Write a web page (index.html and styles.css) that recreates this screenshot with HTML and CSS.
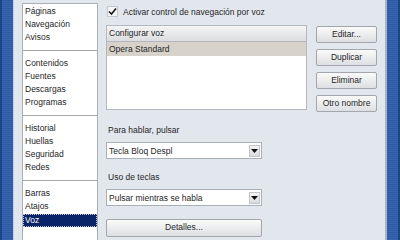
FILE: index.html
```html
<!DOCTYPE html>
<html>

<head>
  <meta charset="utf-8">
  <link rel="stylesheet" href="styles.css">
</head>

<body>
  <div class="window">
    <div class="frame frame-left"></div>

    <div class="dialog">
<!-- section list -->
      <div class="nav">
        <div class="item">Páginas</div>
        <div class="item">Navegación</div>
        <div class="item">Avisos</div>
        <div class="sep"></div>
        <div class="item">Contenidos</div>
        <div class="item">Fuentes</div>
        <div class="item">Descargas</div>
        <div class="item">Programas</div>
        <div class="sep"></div>
        <div class="item">Historial</div>
        <div class="item">Huellas</div>
        <div class="item">Seguridad</div>
        <div class="item">Redes</div>
        <div class="sep"></div>
        <div class="item">Barras</div>
        <div class="item">Atajos</div>
        <div class="item selected">Voz</div>
      </div>

<!-- voice page -->
      <div class="content">
        <div class="check">
          <span class="box">
            <svg width="9" height="9" viewBox="0 0 9 9"><path d="M1 4.5 L3.5 7 L8 1.5" fill="none" stroke="#1a1a1a" stroke-width="1.6"/></svg>
          </span>
          Activar control de navegación por voz
        </div>

        <div class="voices">
          <div class="listview">
            <div class="lv-head">Configurar voz</div>
            <div class="lv-row selected">Opera Standard</div>
          </div>
          <div class="buttons">
            <div class="button">Editar...</div>
            <div class="button">Duplicar</div>
            <div class="button">Eliminar</div>
            <div class="button">Otro nombre</div>
          </div>
        </div>

        <div class="label">Para hablar, pulsar</div>
        <div class="select">
          <span class="value">Tecla Bloq Despl</span>
          <span class="arrow"><svg width="7" height="4" viewBox="0 0 7 4"><path d="M0 0 H7 L3.5 4 Z" fill="#111"/></svg></span>
        </div>

        <div class="label">Uso de teclas</div>
        <div class="select">
          <span class="value">Pulsar mientras se habla</span>
          <span class="arrow"><svg width="7" height="4" viewBox="0 0 7 4"><path d="M0 0 H7 L3.5 4 Z" fill="#111"/></svg></span>
        </div>

        <div class="button wide">Detalles...</div>
      </div>
    </div>

    <div class="frame frame-right"></div>
  </div>
</body>

</html>
```

FILE: styles.css
```css
body {
  margin: 0;
  width: 400px;
  height: 240px;
  overflow: hidden;
  font-family: "Liberation Sans", Arial, sans-serif;
  font-size: 8.5px;
  color: #262626;
}

.window {
  display: flex;
  height: 240px;
}

/* window border */
.frame {
  background-color: #2c5aa6;
  background-image: repeating-linear-gradient(0deg, rgba(255, 255, 255, 0.06) 0 1px, transparent 1px 2px);
}

.frame-left {
  width: 13px;
  border-right: 1px solid #c9d1dd;
  box-shadow: inset 2px 0 0 #1d4585;
}

.frame-right {
  width: 13px;
  border-left: 2px solid #aab3c1;
  box-shadow: inset -2px 0 0 #1d4585;
}

.dialog {
  flex: 1;
  display: flex;
  gap: 8px;
  padding: 3px 7px 0 8px;
  background-color: #e2e7ee;
  overflow: hidden;
}

.nav {
  width: 74px;
  margin-bottom: -4px;
  padding-top: 1px;
  background-color: #fff;
  border: 1px solid #a9b0b9;
}

.item {
  height: 13px;
  line-height: 13px;
  padding-left: 2px;
  white-space: nowrap;
}

.item.selected {
  margin-top: 1px;
  background-color: #0a246a;
  color: #fff;
  outline: 1px dotted #c9c9c9;
  outline-offset: -1px;
}

.sep {
  height: 0;
  margin: 6px 0;
  border-top: 1px solid #a6a6a6;
}

.content {
  flex: 1;
  display: flex;
  flex-direction: column;
}

.check {
  display: flex;
  align-items: center;
  gap: 5px;
  height: 13px;
  margin-top: 2px;
  padding-left: 1px;
}

.box {
  display: flex;
  align-items: center;
  justify-content: center;
  width: 11px;
  height: 11px;
  background-color: #f4f5f7;
  border: 1px solid #c4c8ce;
  box-sizing: border-box;
}

.voices {
  display: flex;
  gap: 9px;
  margin-top: 7px;
}

.listview {
  width: 199px;
  height: 83px;
  background-color: #fff;
  border: 1px solid #b3b9c2;
}

.lv-head {
  height: 15px;
  line-height: 15px;
  padding-left: 2px;
  background: linear-gradient(#f5f5f6, #dcdde0);
  border-bottom: 1px solid #b4b6ba;
}

.lv-row {
  height: 14px;
  line-height: 14px;
  padding-left: 2px;
}

.lv-row.selected {
  background-color: #d7d3cb;
}

.buttons {
  display: flex;
  flex-direction: column;
  gap: 6px;
  margin-top: 1px;
}

.button {
  width: 59px;
  height: 15px;
  line-height: 15px;
  text-align: center;
  background: linear-gradient(#fafafa, #dedfe2);
  border: 1px solid #a3a7ad;
  border-radius: 2px;
}

.label {
  height: 13px;
  line-height: 13px;
  margin-top: 12px;
  padding-left: 2px;
}

.select {
  display: flex;
  align-items: center;
  justify-content: space-between;
  width: 154px;
  height: 15px;
  margin-top: 5px;
  background-color: #fff;
  border: 1px solid #a9b0b9;
}

.value {
  padding-left: 2px;
}

.arrow {
  display: flex;
  align-items: center;
  justify-content: center;
  width: 11px;
  height: 12px;
  margin-right: 1px;
  background: linear-gradient(#f4f4f5, #dadbdf);
  border: 1px solid #c1c4c9;
  box-sizing: border-box;
}

.button.wide {
  width: 154px;
  height: 16px;
  margin-top: 13px;
}
```
